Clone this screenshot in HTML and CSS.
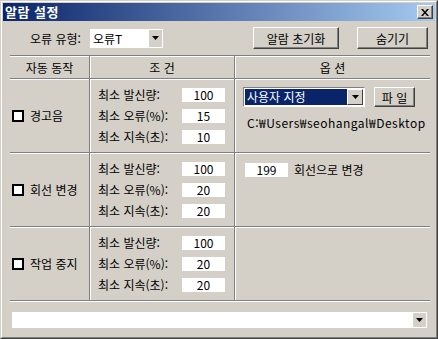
FILE: index.html
```html
<!DOCTYPE html>
<html lang="ko">
<head>
  <meta charset="UTF-8" />
  <title>알람 설정</title>
  <link rel="stylesheet" href="styles.css">
</head>
<body>
  <div class="window">
    <div class="window-inner">

      <!-- title bar -->
      <div class="titlebar">
        <span class="title">알람 설정</span>
        <button class="close">
          <svg width="8" height="7" viewBox="0 0 8 7"><path d="M0 0h2l2 2.5L6 0h2L5 3.5 8 7H6L4 4.5 2 7H0l3-3.5z" fill="#000"/></svg>
        </button>
      </div>

      <!-- error type + buttons -->
      <div class="toolbar">
        <span class="type-label">오류 유형:</span>
        <div class="combo combo-type">
          <span class="combo-text">오류T</span>
          <span class="drop"><svg width="7" height="4" viewBox="0 0 7 4"><path d="M0 0h7L3.5 4z" fill="#000"/></svg></span>
        </div>
        <button class="btn btn-reset">알람 초기화</button>
        <button class="btn btn-hide">숨기기</button>
      </div>

      <!-- alarm table -->
      <div class="grid">
        <div class="cell head">자동 동작</div>
        <div class="cell head mid">조 건</div>
        <div class="cell head mid">옵 션</div>

        <!-- 경고음 -->
        <div class="cell act"><span class="check"></span>경고음</div>
        <div class="cell mid cond">
          <div class="field"><span class="field-label">최소 발신량:</span><input class="num" value="100"></div>
          <div class="field"><span class="field-label">최소 오류(%):</span><input class="num" value="15"></div>
          <div class="field"><span class="field-label">최소 지속(초):</span><input class="num" value="10"></div>
        </div>
        <div class="cell mid opt">
          <div class="opt-top">
            <div class="select">
              <span class="select-text">사용자 지정</span>
              <span class="select-drop"><svg width="7" height="4" viewBox="0 0 7 4"><path d="M0 0h7L3.5 4z" fill="#000"/></svg></span>
            </div>
            <button class="btn btn-file">파 일</button>
          </div>
          <div class="path">C:₩Users₩seohangal₩Desktop</div>
        </div>

        <!-- 회선 변경 -->
        <div class="cell act"><span class="check"></span>회선 변경</div>
        <div class="cell mid cond">
          <div class="field"><span class="field-label">최소 발신량:</span><input class="num" value="100"></div>
          <div class="field"><span class="field-label">최소 오류(%):</span><input class="num" value="20"></div>
          <div class="field"><span class="field-label">최소 지속(초):</span><input class="num" value="20"></div>
        </div>
        <div class="cell mid opt opt-line">
          <input class="num" value="199"><span>회선으로 변경</span>
        </div>

        <!-- 작업 중지 -->
        <div class="cell act"><span class="check"></span>작업 중지</div>
        <div class="cell mid cond">
          <div class="field"><span class="field-label">최소 발신량:</span><input class="num" value="100"></div>
          <div class="field"><span class="field-label">최소 오류(%):</span><input class="num" value="20"></div>
          <div class="field"><span class="field-label">최소 지속(초):</span><input class="num" value="20"></div>
        </div>
        <div class="cell mid opt"></div>
      </div>

      <!-- log combo -->
      <div class="combo combo-log">
        <span class="combo-text"></span>
        <span class="drop"><svg width="7" height="4" viewBox="0 0 7 4"><path d="M0 0h7L3.5 4z" fill="#000"/></svg></span>
      </div>

    </div>
  </div>
</body>
</html>
```

FILE: styles.css
```css
* {
  box-sizing: border-box;
}

body {
  margin: 0;
  background: #d4d0c8;
  font-family: "Noto Sans CJK KR", "Liberation Sans", sans-serif;
  font-size: 12px;
  color: #000;
}

/* window frame */
.window {
  width: 438px;
  height: 339px;
  border: 1px solid;
  border-color: #d4d0c8 #404040 #404040 #d4d0c8;
  background: #d4d0c8;
  overflow: hidden;
}

.window-inner {
  height: 100%;
  border: 1px solid;
  border-color: #fff #808080 #808080 #fff;
  padding: 1px;
}

.titlebar {
  height: 18px;
  display: flex;
  align-items: center;
  justify-content: space-between;
  padding: 0 2px 0 2px;
  background: linear-gradient(to right, #0a246a, #a6caf0);
}

.title {
  color: #fff;
  font-weight: bold;
  font-size: 13px;
  line-height: 18px;
  letter-spacing: 0.5px;
}

.close {
  width: 16px;
  height: 14px;
  padding: 0;
  display: flex;
  align-items: center;
  justify-content: center;
  background: #d4d0c8;
  border: 1px solid;
  border-color: #fff #404040 #404040 #fff;
  box-shadow: inset -1px -1px #808080;
}

/* top row */
.toolbar {
  height: 22px;
  margin-top: 6px;
  display: flex;
  align-items: center;
  padding: 0 7px 0 27px;
}

.type-label {
  width: 60px;
}

.btn {
  height: 22px;
  padding: 0;
  font: inherit;
  color: #000;
  background: #d4d0c8;
  border: 1px solid;
  border-color: #fff #404040 #404040 #fff;
  box-shadow: inset -1px -1px #808080;
}

.btn-reset {
  width: 86px;
  margin-left: auto;
}

.btn-hide {
  width: 71px;
  margin-left: 18px;
}

/* flat combos */
.combo {
  display: flex;
  background: #fff;
  padding: 1px;
}

.combo-text {
  flex: 1;
  padding-left: 2px;
  line-height: 17px;
}

.drop {
  width: 13px;
  display: flex;
  align-items: center;
  justify-content: center;
  background: #d4d0c8;
}

.combo-type {
  width: 73px;
  height: 19px;
}

.combo-log {
  width: 415px;
  height: 16px;
  margin: 11px 0 0 9px;
}

/* table with etched lines */
.grid {
  display: grid;
  grid-template-columns: 79px 145px 196px;
  grid-template-rows: 23px 74px 74px 74px;
  width: 420px;
  margin: 6px 0 0 7px;
  border-bottom: 1px solid #808080;
  box-shadow: 0 1px #fff;
}

.cell {
  border-top: 1px solid #808080;
  box-shadow: inset 0 1px #fff;
}

.cell.mid {
  border-left: 1px solid #808080;
  box-shadow: inset 0 1px #fff, inset 1px 0 #fff;
}

.head {
  display: flex;
  align-items: center;
  justify-content: center;
  padding-top: 1px;
}

.act {
  display: flex;
  align-items: center;
  padding-left: 2px;
}

.check {
  width: 12px;
  height: 12px;
  border: 2px solid #000;
  background: #fff;
  margin-right: 6px;
}

.cond {
  display: flex;
  flex-direction: column;
  gap: 7px;
  padding: 9px 0 0 8px;
}

.field {
  display: flex;
  align-items: center;
  height: 14px;
}

.field-label {
  width: 84px;
  line-height: 14px;
}

.num {
  width: 43px;
  height: 14px;
  padding: 0;
  border: none;
  background: #fff;
  font: inherit;
  line-height: 14px;
  text-align: center;
  color: #000;
}

/* options column */
.opt {
  padding: 8px 0 0 8px;
}

.opt-top {
  display: flex;
}

.select {
  width: 122px;
  height: 20px;
  display: flex;
  padding: 1px;
  background: #fff;
  border: 1px solid;
  border-color: #808080 #fff #fff #808080;
}

.select-text {
  flex: 1;
  background: #0a246a;
  color: #fff;
  padding-left: 2px;
  line-height: 16px;
}

.select-drop {
  width: 16px;
  display: flex;
  align-items: center;
  justify-content: center;
  background: #d4d0c8;
  border: 1px solid;
  border-color: #fff #404040 #404040 #fff;
}

.btn-file {
  width: 41px;
  height: 20px;
  margin-left: 9px;
}

.path {
  margin-top: 9px;
  padding-left: 4px;
  line-height: 14px;
  letter-spacing: 0.5px;
  white-space: nowrap;
}

.opt-line {
  display: flex;
  align-items: flex-start;
  gap: 6px;
  padding: 10px 0 0 10px;
}

.opt-line span {
  line-height: 14px;
}
```
